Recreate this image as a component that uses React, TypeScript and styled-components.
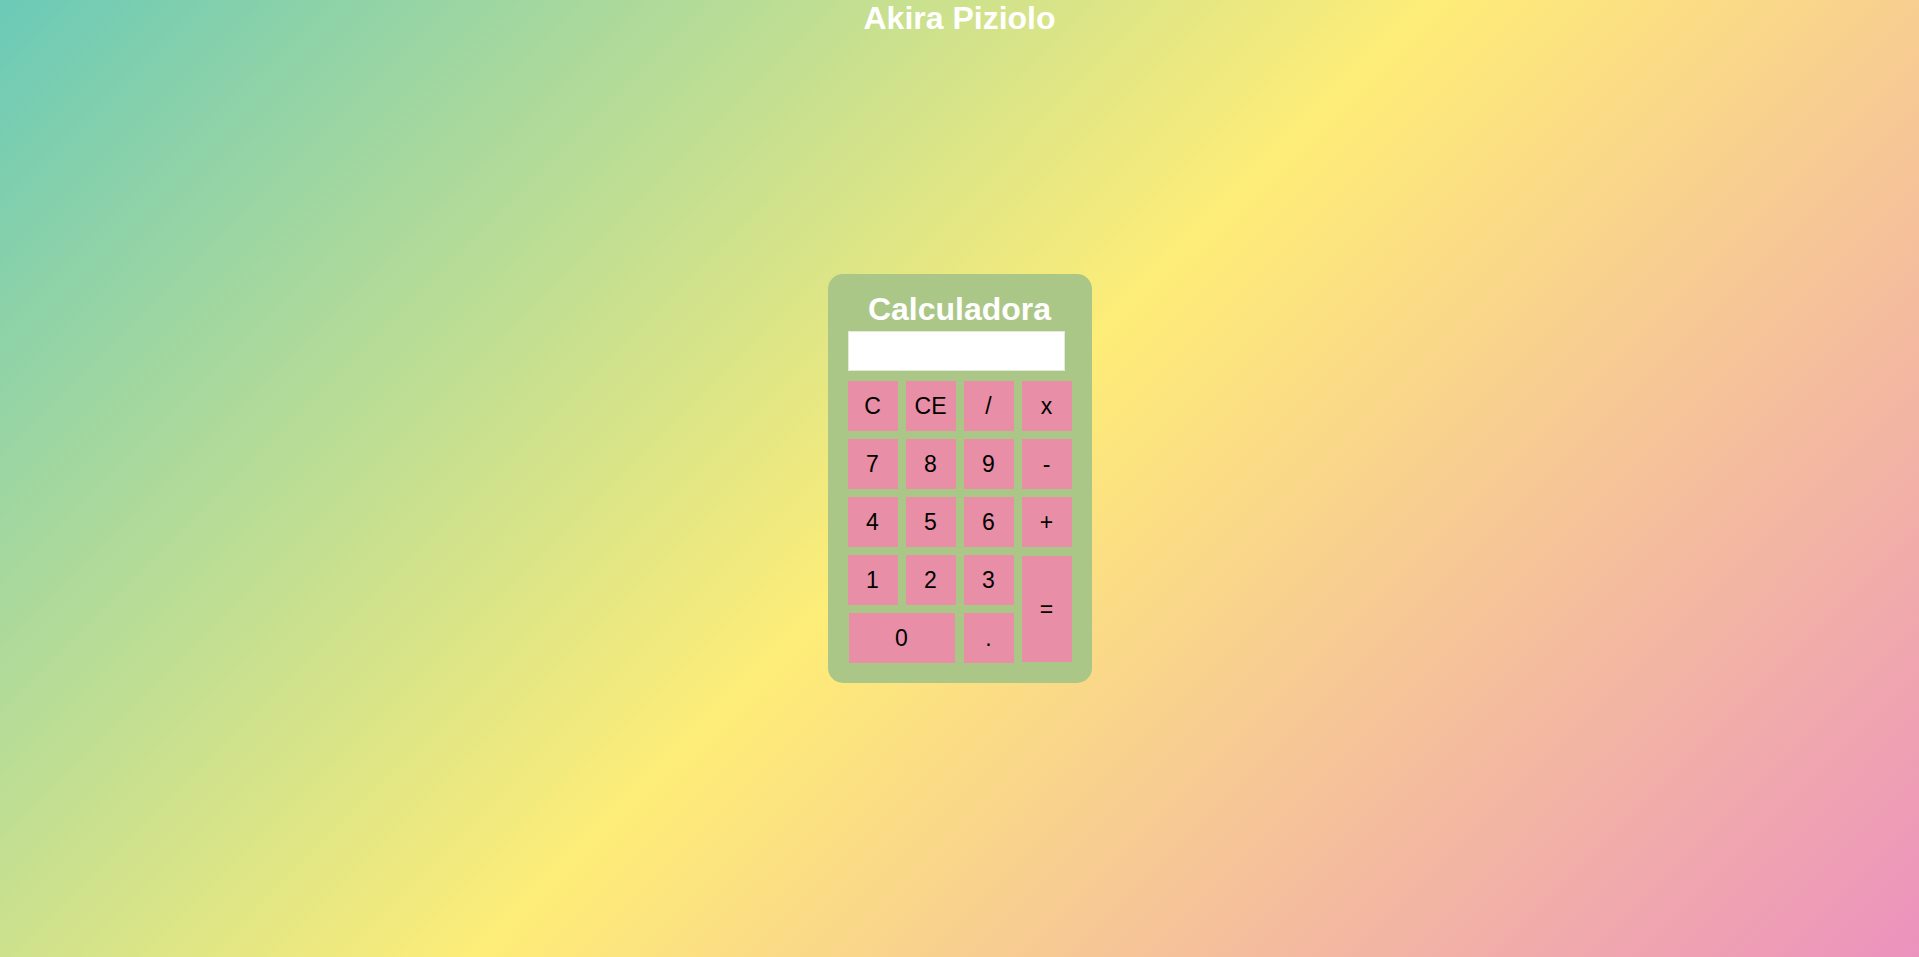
import React from "react";
import styled, { createGlobalStyle } from "styled-components";

const GlobalStyle = createGlobalStyle`
  html, body {
    margin: 0;
    padding: 0;
  }
  body {
    font-family: "Liberation Sans", Arial, sans-serif;
    background: linear-gradient(135deg, #6bcab7 0%, #feed78 50%, #ec92be 100%);
    min-height: 100vh;
  }
`;

const Page = styled.div`
  display: grid;
  min-height: 100vh;
  grid-template-columns: 1fr;
  grid-template-rows: 1fr;
`;

const Author = styled.h1`
  grid-area: 1 / 1;
  align-self: start;
  justify-self: center;
  margin: 0;
  font-size: 32px;
  font-weight: bold;
  color: #ffffff;
`;

const Calculator = styled.div`
  grid-area: 1 / 1;
  align-self: center;
  justify-self: center;
  width: 264px;
  box-sizing: border-box;
  padding: 17px 20px 20px;
  background: #abc787;
  border-radius: 15px;
  display: flex;
  flex-direction: column;
`;

const Title = styled.h2`
  margin: 0 0 4px;
  font-size: 32px;
  font-weight: bold;
  color: #ffffff;
  text-align: center;
  line-height: 36.8px;
`;

const Display = styled.input`
  width: 217px;
  height: 40px;
  box-sizing: border-box;
  margin: 0 0 10px;
  border: 1px solid #e3ead9;
  background: #ffffff;
  outline: none;
  font-family: "Liberation Sans", Arial, sans-serif;
  font-size: 22px;
  padding: 0 6px;
`;

const Keys = styled.div`
  display: grid;
  grid-template-columns: repeat(4, 50px);
  grid-auto-rows: 50px;
  gap: 8px;
`;

const Key = styled.button<{ $wide?: boolean; $tall?: boolean }>`
  border: none;
  padding: 0;
  margin: 0;
  background: #e88ea6;
  color: #000000;
  font-family: "Liberation Sans", Arial, sans-serif;
  font-size: 23px;
  cursor: pointer;
  grid-column: ${(p) => (p.$wide ? "span 2" : "auto")};
  grid-row: ${(p) => (p.$tall ? "span 2" : "auto")};
  width: ${(p) => (p.$wide ? "106px" : "50px")};
  height: ${(p) => (p.$tall ? "106px" : "50px")};
  justify-self: center;
  align-self: center;
`;

const keys: { label: string; wide?: boolean; tall?: boolean }[] = [
  { label: "C" },
  { label: "CE" },
  { label: "/" },
  { label: "x" },
  { label: "7" },
  { label: "8" },
  { label: "9" },
  { label: "-" },
  { label: "4" },
  { label: "5" },
  { label: "6" },
  { label: "+" },
  { label: "1" },
  { label: "2" },
  { label: "3" },
  { label: "=", tall: true },
  { label: "0", wide: true },
  { label: "." },
];

export default function App() {
  return (
    <>
      <GlobalStyle />
      <Page>
        <Author>Akira Piziolo</Author>
        <Calculator>
          <Title>Calculadora</Title>
          <Display type="text" readOnly value="" />
          <Keys>
            {keys.map((k) => (
              <Key key={k.label} $wide={k.wide} $tall={k.tall}>
                {k.label}
              </Key>
            ))}
          </Keys>
        </Calculator>
      </Page>
    </>
  );
}
